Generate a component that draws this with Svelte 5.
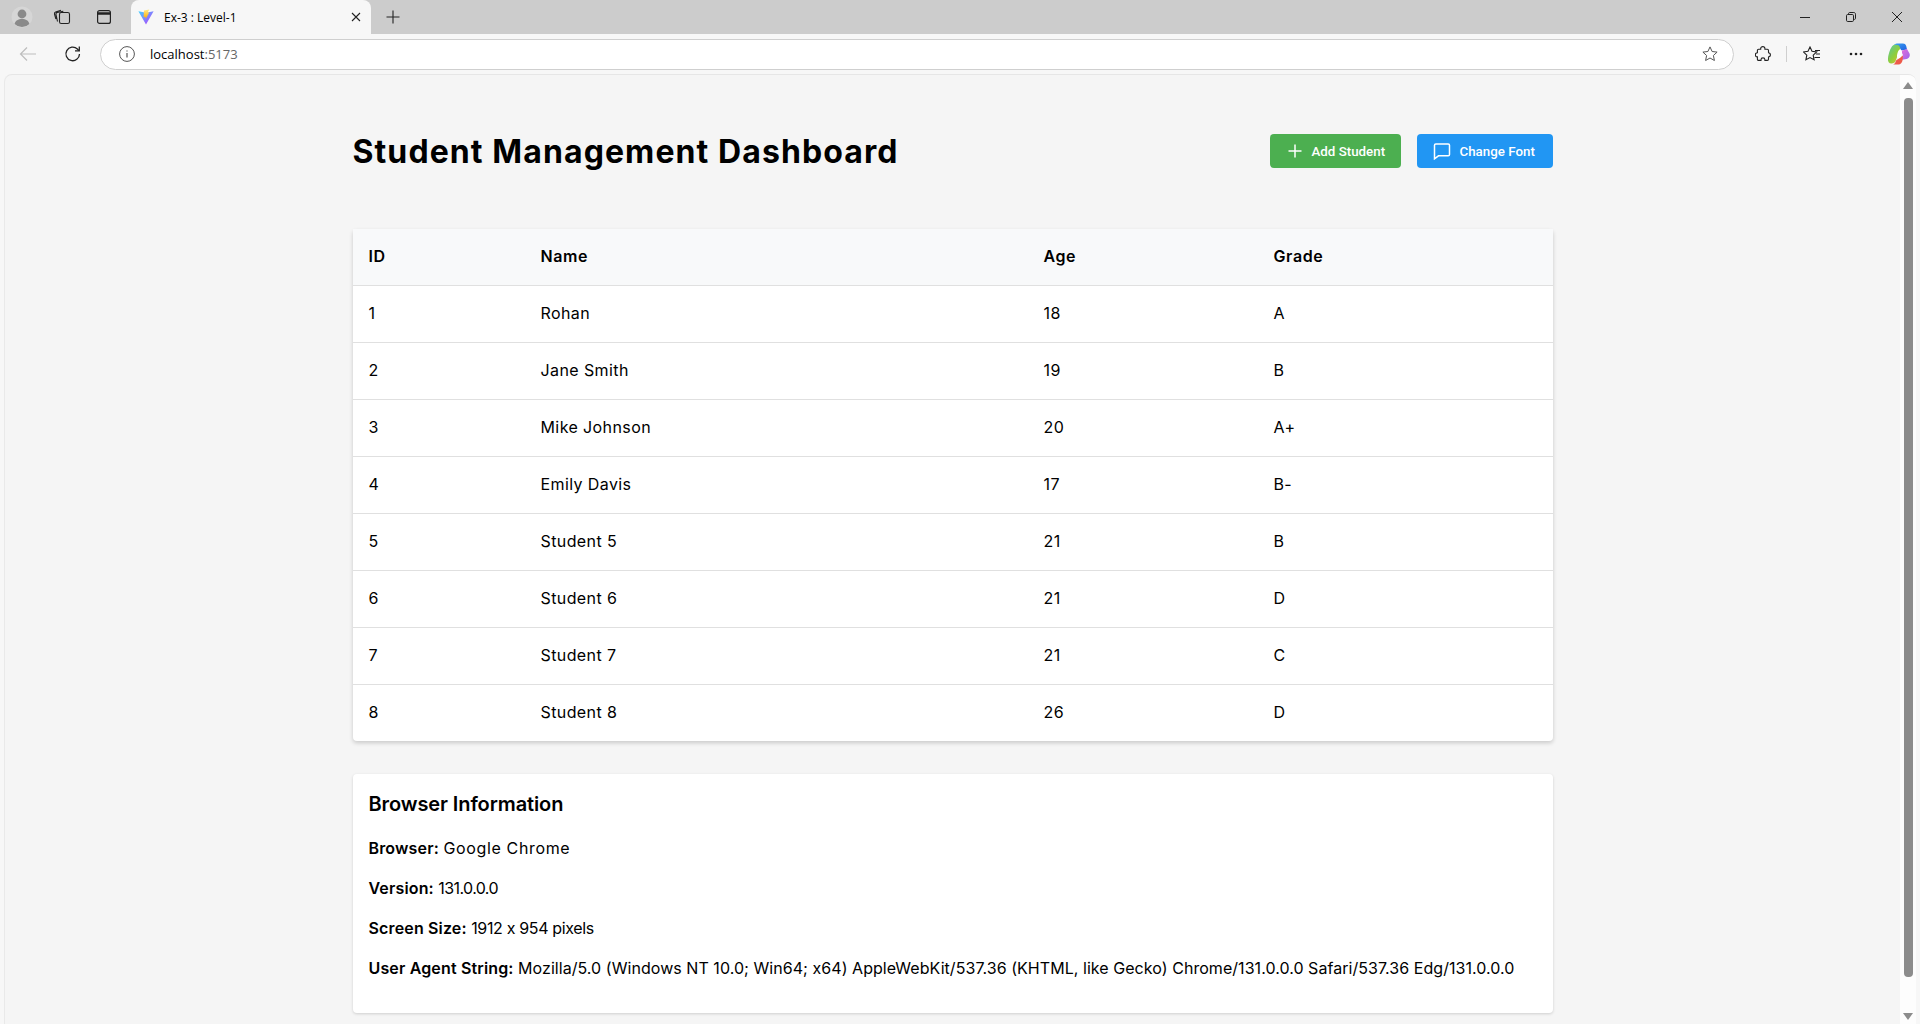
<script>
  const students = [
    { id: 1, name: 'Rohan', age: 18, grade: 'A' },
    { id: 2, name: 'Jane Smith', age: 19, grade: 'B' },
    { id: 3, name: 'Mike Johnson', age: 20, grade: 'A+' },
    { id: 4, name: 'Emily Davis', age: 17, grade: 'B-' },
    { id: 5, name: 'Student 5', age: 21, grade: 'B' },
    { id: 6, name: 'Student 6', age: 21, grade: 'D' },
    { id: 7, name: 'Student 7', age: 21, grade: 'C' },
    { id: 8, name: 'Student 8', age: 26, grade: 'D' }
  ];
</script>

<div class="browser">
  <!-- Tab strip -->
  <div class="tabstrip">
    <div class="strip-left">
      <span class="avatar">
        <svg width="22" height="22" viewBox="0 0 22 22"><circle cx="11" cy="11" r="10.5" fill="#d6d6d6" /><circle cx="11" cy="8" r="4.4" fill="#8a8a8a" /><path d="M3.6 18c.8-3.6 3.6-5 7.4-5s6.600 1.400 7.400 5a10.500 10.500 0 0 1-14.800 0z" fill="#8a8a8a" /></svg>
      </span>
      <svg class="sicon" width="18" height="18" viewBox="0 0 18 18" fill="none" stroke="#222" stroke-width="1.100"><rect x="6.500" y="4.500" width="10" height="11" rx="1.800" /><path d="M4.500 13.500 3 6.500c-.2-1 .3-1.800 1.300-2l6-1.300M2.900 11 1.500 6c-.2-.9.200-1.600 1.100-1.900L8 2.200" /></svg>
      <svg class="sicon second" width="18" height="18" viewBox="0 0 18 18" fill="none" stroke="#222" stroke-width="1.200"><rect x="2.600" y="2.600" width="12.800" height="12.800" rx="2" /><path d="M2.600 5.500h12.800" stroke-width="2.500" /></svg>
    </div>
    <div class="tab">
      <svg width="16" height="16" viewBox="0 0 16 16"><defs><linearGradient id="vite-a" x1="0" y1="0" x2="1" y2="1"><stop offset="0" stop-color="#41d1ff" /><stop offset="1" stop-color="#bd34fe" /></linearGradient><linearGradient id="vite-b" x1="0" y1="0" x2="0" y2="1"><stop offset="0" stop-color="#ffea83" /><stop offset="1" stop-color="#ffa800" /></linearGradient></defs><path d="M.4 2.300 8 15.600 15.600 2.300 8 3.700z" fill="url(#vite-a)" /><path d="M11.300.6 6 1.600l-.4 6.600 1.700-.4.500 2.200 3.500-6.800-1.700.3z" fill="url(#vite-b)" /></svg>
      <span class="tab-title">Ex-3 : Level-1</span>
      <svg class="tab-close" width="10" height="10" viewBox="0 0 10 10" stroke="#222" stroke-width="1.100"><path d="M1 1l8 8M9 1 1 9" /></svg>
    </div>
    <svg class="new-tab" width="14" height="14" viewBox="0 0 14 14" stroke="#222" stroke-width="1.100"><path d="M7 .5v13M.5 7h13" /></svg>
    <div class="win-controls">
      <svg width="10" height="10" viewBox="0 0 10 10" stroke="#222"><path d="M0 5.500h10" /></svg>
      <svg width="10" height="10" viewBox="0 0 10 10" fill="none" stroke="#222"><rect x=".5" y="2.500" width="7" height="7" rx="1.200" /><path d="M2.500 2.500V1.700c0-.7.500-1.200 1.200-1.200h4.100c1 0 1.700.7 1.700 1.700v4.100c0 .7-.5 1.200-1.200 1.200" /></svg>
      <svg width="10" height="10" viewBox="0 0 10 10" stroke="#222"><path d="M0 0l10 10M10 0 0 10" /></svg>
    </div>
  </div>

  <!-- Toolbar -->
  <div class="toolbar">
    <svg class="back" width="18" height="18" viewBox="0 0 18 18" fill="none" stroke="#bdbdbd" stroke-width="1.200"><path d="M17 9H1.500M8 2.500 1.500 9 8 15.500" /></svg>
    <svg class="reload" width="18" height="18" viewBox="0 0 18 18" fill="none" stroke="#222" stroke-width="1.300"><path d="M15.500 9A6.800 6.800 0 1 1 13.400 4L15 5.600" /><path d="M15.300 1.500v4.300H11" /></svg>
    <div class="address">
      <svg width="16" height="16" viewBox="0 0 16 16" fill="none" stroke="#555" stroke-width="1"><circle cx="8" cy="8" r="7.400" /><path d="M8 7v4.500M8 4.400v1.200" stroke-width="1.200" /></svg>
      <span class="url">localhost<span class="port">:5173</span></span>
      <svg class="star" width="16" height="16" viewBox="0 0 16 16" fill="none" stroke="#555" stroke-width="1"><path d="M8 .9l2.100 4.600 5 .6-3.700 3.400 1 5L8 12l-4.400 2.500 1-5L.9 6.100l5-.6z" /></svg>
    </div>
    <svg class="tool puzzle" width="16" height="16" viewBox="0 0 16 16" fill="none" stroke="#222" stroke-width="1.100"><path d="M5.700 3.200V2.600C5.700 1.300 6.700.6 7.800.6s2.100.7 2.100 2v.6h2.400c.7 0 1.200.5 1.200 1.200v2.300h-.3c1.400 0 2.200 1 2.200 2.100s-.8 2.100-2.200 2.100h.3v2.300c0 .7-.5 1.200-1.200 1.200H9.900v-.7c0-1.100-.9-1.800-1.900-1.800s-2 .7-2 1.800v.7H3.600c-.7 0-1.200-.5-1.200-1.200v-2.300h-.2C1 11 .4 9.900.4 8.800s.6-2.100 1.800-2.100h.2V4.400c0-.7.500-1.200 1.200-1.200z" /></svg>
    <span class="sep"></span>
    <svg class="tool favs" width="18" height="16" viewBox="0 0 18 16" fill="none" stroke="#222" stroke-width="1.100"><path d="M7 1l2 4.300 4.700.6-3.500 3.200.9 4.700L7 11.600l-4.100 2.200.9-4.700L.3 5.900 5 5.300z" /><path d="M12 4.500h5M13 8h4M11.500 11.500H17" /></svg>
    <svg class="tool dots" width="14" height="4" viewBox="0 0 14 4" fill="#222"><circle cx="2" cy="2" r="1.300" /><circle cx="7" cy="2" r="1.300" /><circle cx="12" cy="2" r="1.300" /></svg>
    <svg class="copilot" width="24" height="24" viewBox="0 0 24 24">
      <defs>
        <linearGradient id="cp-a" x1="0" y1="0" x2="1" y2="1"><stop offset="0" stop-color="#3aa0f0" /><stop offset="1" stop-color="#1f5fe0" /></linearGradient>
        <linearGradient id="cp-b" x1="0" y1="0" x2="1" y2="1"><stop offset="0" stop-color="#54c7a8" /><stop offset="0.5" stop-color="#8fce3c" /><stop offset="1" stop-color="#f4b82e" /></linearGradient>
        <linearGradient id="cp-c" x1="0" y1="0" x2="1" y2="1"><stop offset="0" stop-color="#e66fd8" /><stop offset="1" stop-color="#9a63ee" /></linearGradient>
      </defs>
      <path d="M7.500 2.500h8L12.500 8 9 18c-.8 2.600-2.400 3.500-4.500 3.500C2 21.500.6 19.500 1 16.500 1.500 11 4 3.500 7.500 2.500z" fill="url(#cp-b)" />
      <path d="M7 2.800C8 1.800 9.500 1.500 11 1.500h5c1.500 0 2.800.8 3.200 2.500l.8 3.500-6 1-1.500-4c-.5-1-1.500-2-5.500-1.700z" fill="url(#cp-a)" />
      <path d="M14 9l6-2 2.500 4.500c1 2.500-.6 5-3 5.500l-5.500 1L16 13z" fill="url(#cp-c)" />
      <path d="M9 18.500l7-5-.5 5c-.4 2.200-2 4-4 4H6c1.800-.5 2.500-2 3-4z" fill="#ee5a4a" />
      <ellipse cx="12.500" cy="12" rx="2.200" ry="4.500" transform="rotate(15 12.500 12)" fill="#fff" />
    </svg>
  </div>

  <!-- Page viewport -->
  <div class="viewport">
    <main class="page">
      <div class="container">
        <header class="head">
          <h1>Student Management Dashboard</h1>
          <div class="actions">
            <button class="btn add">
              <svg width="14" height="14" viewBox="0 0 14 14" stroke="#fff" stroke-width="1.500"><path d="M7 .5v13M.5 7h13" /></svg>
              Add Student
            </button>
            <button class="btn font">
              <svg width="18" height="18" viewBox="0 0 18 18" fill="none" stroke="#fff" stroke-width="1.500"><path d="M2.800 2h12.400c.8 0 1.300.5 1.300 1.300v9.200c0 .8-.5 1.300-1.300 1.300H5.500l-4 3V3.300c0-.8.500-1.300 1.300-1.300z" /></svg>
              Change Font
            </button>
          </div>
        </header>

        <table>
          <colgroup>
            <col class="c-id" /><col class="c-name" /><col class="c-age" /><col class="c-grade" />
          </colgroup>
          <thead>
            <tr><th>ID</th><th>Name</th><th>Age</th><th>Grade</th></tr>
          </thead>
          <tbody>
            {#each students as s}
              <tr><td>{s.id}</td><td>{s.name}</td><td>{s.age}</td><td>{s.grade}</td></tr>
            {/each}
          </tbody>
        </table>

        <section class="info">
          <h2>Browser Information</h2>
          <p><strong>Browser:</strong> <span class="wide">Google Chrome</span></p>
          <p><strong>Version:</strong> <span class="digits">131.0.0.0</span></p>
          <p><strong>Screen Size:</strong> <span class="size">1912 x 954 pixels</span></p>
          <p><strong>User Agent String:</strong> <span class="ua">Mozilla/5.0 (Windows NT 10.0; Win64; x64) AppleWebKit/537.36 (KHTML, like Gecko) Chrome/131.0.0.0 Safari/537.36 Edg/131.0.0.0</span></p>
        </section>
      </div>
    </main>
    <div class="scrollbar">
      <span class="arrow up"></span>
      <span class="thumb"></span>
      <span class="arrow down"></span>
    </div>
  </div>
</div>

<style>
  :global(body) {
    margin: 0;
    overflow: hidden;
    background: #f7f7f7;
  }

  .browser {
    height: 100vh;
    display: flex;
    flex-direction: column;
    font-family: Inter, "Open Sans", sans-serif;
    color: #000;
  }

  .tabstrip {
    height: 34px;
    background: #cccccc;
    display: flex;
    align-items: center;
    flex-shrink: 0;
  }

  .strip-left {
    display: flex;
    align-items: center;
    width: 131px;
    padding-left: 11px;
    box-sizing: border-box;
  }

  .avatar {
    display: flex;
    margin-right: 20px;
  }

  .second {
    margin-left: 24px;
  }

  .tab {
    width: 240px;
    height: 34px;
    box-sizing: border-box;
    background: #f7f7f7;
    border-radius: 8px 8px 0 0;
    display: flex;
    align-items: center;
    padding: 0 10px 0 7px;
    margin-right: 15px;
    flex-shrink: 0;
  }

  .tab-title {
    font-family: "Open Sans", sans-serif;
    font-size: 12px;
    margin-left: 10px;
    flex: 1;
    white-space: nowrap;
  }

  .win-controls {
    margin-left: auto;
    display: flex;
    gap: 36px;
    align-items: center;
    padding-right: 18px;
  }

  .toolbar {
    height: 40px;
    display: flex;
    align-items: center;
    flex-shrink: 0;
    background: #f7f7f7;
  }

  .back {
    margin-left: 19px;
  }

  .reload {
    margin-left: 27px;
  }

  .address {
    margin-left: 18px;
    width: 1634px;
    height: 31px;
    box-sizing: border-box;
    background: #fff;
    border: 1px solid #cfcfcf;
    border-radius: 16px;
    display: flex;
    align-items: center;
    padding: 0 15px 0 18px;
  }

  .url {
    font-family: "Open Sans", sans-serif;
    font-size: 13px;
    margin-left: 15px;
    flex: 1;
  }

  .port {
    color: #666;
  }

  .puzzle {
    margin-left: 21px;
  }

  .sep {
    width: 1px;
    height: 16px;
    background: #cfcfcf;
    margin: 0 16px 0 15px;
  }

  .dots {
    margin-left: 28px;
  }

  .copilot {
    margin-left: 24px;
  }

  .viewport {
    flex: 1;
    min-height: 0;
    display: flex;
    margin: 0 4px 0 4px;
    background: #f5f5f5;
    border-radius: 8px 8px 0 0;
    border-top: 1px solid #e6e6e6;
    border-left: 1px solid #e9e9e9;
    overflow: hidden;
  }

  .page {
    flex: 1;
    min-width: 0;
    overflow: hidden;
  }

  .container {
    width: 1200px;
    margin: 0 auto;
    padding-top: 53px;
  }

  .head {
    display: flex;
    justify-content: space-between;
    align-items: center;
    margin-bottom: 53px;
  }

  h1 {
    margin: 0;
    font-size: 32px;
    line-height: 48px;
    font-weight: 700;
    letter-spacing: 1.1px;
  }

  .actions {
    display: flex;
    gap: 16px;
    margin-bottom: 2px;
  }

  .btn {
    display: flex;
    align-items: center;
    height: 34px;
    border: 0;
    border-radius: 4px;
    color: #fff;
    font-family: Roboto, sans-serif;
    font-size: 13.33px;
    font-weight: 500;
    white-space: nowrap;
    padding: 0 0 0 18px;
    gap: 10px;
  }

  .btn svg {
    flex-shrink: 0;
  }

  .add {
    background: #4caf50;
    width: 131px;
  }

  .font {
    background: #2196f3;
    width: 136px;
    padding-left: 16px;
    gap: 9px;
  }

  table {
    width: 100%;
    table-layout: fixed;
    border-collapse: collapse;
    background: #fff;
    border-radius: 4px;
    box-shadow: 0 2px 4px rgba(0, 0, 0, 0.18);
    font-size: 16px;
    margin-bottom: 33px;
  }

  .c-id { width: 172px; }
  .c-name { width: 503px; }
  .c-age { width: 230px; }

  th, td {
    height: 54px;
    padding: 0 16px 2px;
    text-align: left;
    letter-spacing: 0.4px;
    border-bottom: 1px solid #e0e0e0;
  }

  th {
    background: #f8f9fa;
    font-weight: 600;
    letter-spacing: 0.6px;
  }

  tbody tr:last-child td {
    border-bottom: 0;
  }

  .info {
    background: #fff;
    border-radius: 4px;
    box-shadow: 0 1px 3px rgba(0, 0, 0, 0.16);
    padding: 15px 16px 16px;
    height: 239px;
    box-sizing: border-box;
    font-size: 16px;
  }

  h2 {
    margin: 0 0 17px;
    font-size: 20px;
    line-height: 30px;
    font-weight: 600;
    letter-spacing: -0.1px;
  }

  p {
    margin: 0 0 16px;
    line-height: 24px;
    white-space: nowrap;
  }

  strong {
    font-weight: 600;
    letter-spacing: 0.15px;
  }

  .wide { letter-spacing: 0.65px; }
  .digits { letter-spacing: -0.6px; }
  .size { letter-spacing: -0.35px; }
  .ua { letter-spacing: 0.05px; }

  .scrollbar {
    width: 16px;
    flex-shrink: 0;
    background: #fdfdfd;
    display: flex;
    flex-direction: column;
    align-items: center;
    padding: 7px 0 4px;
    box-sizing: border-box;
  }

  .thumb {
    width: 9px;
    height: 879px;
    margin-top: 9px;
    background: #8c8c8c;
    border-radius: 4px;
  }

  .arrow {
    width: 0;
    height: 0;
    border-left: 5px solid transparent;
    border-right: 5px solid transparent;
  }

  .up {
    border-bottom: 7px solid #8c8c8c;
  }

  .down {
    margin-top: auto;
    border-top: 7px solid #8c8c8c;
  }
</style>
